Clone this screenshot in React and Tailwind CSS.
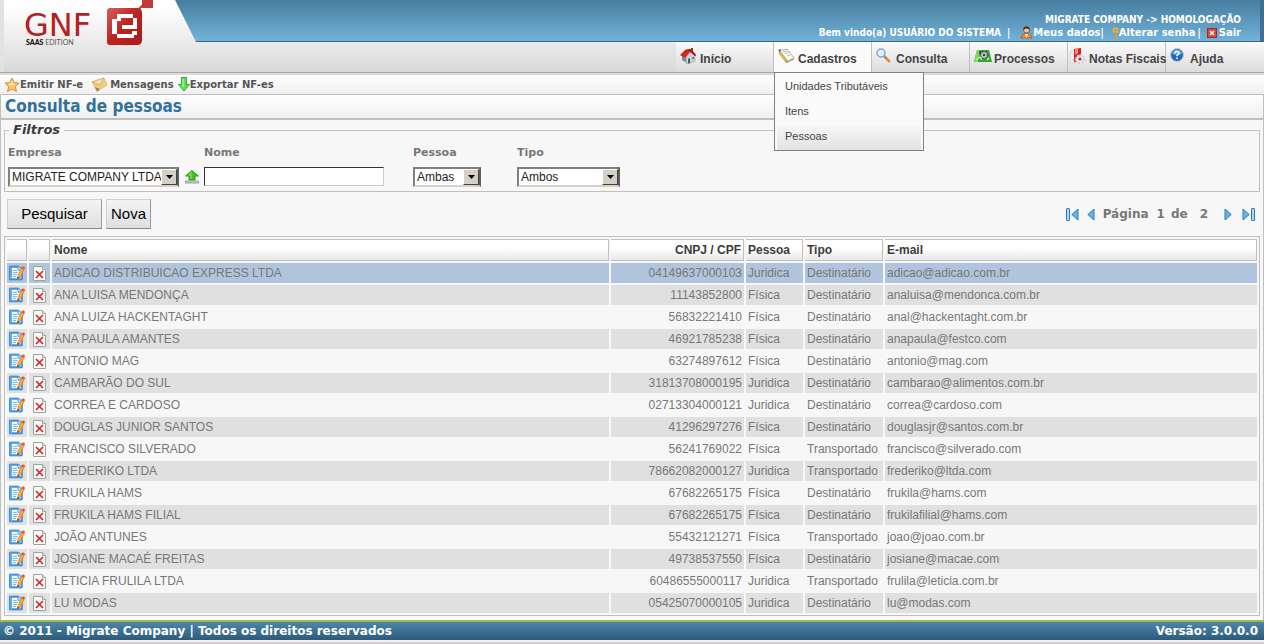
const menu = [
  { label: "Início", icon: HomeIcon },
  { label: "Cadastros", icon: FormIcon, open: true },
  { label: "Consulta", icon: SearchIcon },
  { label: "Processos", icon: ProcessIcon },
  { label: "Notas Fiscais", icon: InvoiceIcon, tight: true },
  { label: "Ajuda", icon: HelpIcon },
];

const submenu = ["Unidades Tributáveis", "Itens", "Pessoas"];

const pessoas = [
  ["ADICAO DISTRIBUICAO EXPRESS LTDA", "04149637000103", "Juridica", "Destinatário", "adicao@adicao.com.br"],
  ["ANA LUISA MENDONÇA", "11143852800", "Física", "Destinatário", "analuisa@mendonca.com.br"],
  ["ANA LUIZA HACKENTAGHT", "56832221410", "Física", "Destinatário", "anal@hackentaght.com.br"],
  ["ANA PAULA AMANTES", "46921785238", "Física", "Destinatário", "anapaula@festco.com"],
  ["ANTONIO MAG", "63274897612", "Física", "Destinatário", "antonio@mag.com"],
  ["CAMBARÃO DO SUL", "31813708000195", "Juridica", "Destinatário", "cambarao@alimentos.com.br"],
  ["CORREA E CARDOSO", "02713304000121", "Juridica", "Destinatário", "correa@cardoso.com"],
  ["DOUGLAS JUNIOR SANTOS", "41296297276", "Física", "Destinatário", "douglasjr@santos.com.br"],
  ["FRANCISCO SILVERADO", "56241769022", "Física", "Transportado", "francisco@silverado.com"],
  ["FREDERIKO LTDA", "78662082000127", "Juridica", "Transportado", "frederiko@ltda.com"],
  ["FRUKILA HAMS", "67682265175", "Física", "Destinatário", "frukila@hams.com"],
  ["FRUKILA HAMS FILIAL", "67682265175", "Física", "Destinatário", "frukilafilial@hams.com"],
  ["JOÃO ANTUNES", "55432121271", "Física", "Transportado", "joao@joao.com.br"],
  ["JOSIANE MACAÉ FREITAS", "49738537550", "Física", "Destinatário", "josiane@macae.com"],
  ["LETICIA FRULILA LTDA", "60486555000117", "Juridica", "Transportado", "frulila@leticia.com.br"],
  ["LU MODAS", "05425070000105", "Juridica", "Destinatário", "lu@modas.com"],
];

function HomeIcon() {
  return (
    <svg width="17" height="17" viewBox="0 0 17 17" aria-hidden="true">
      <path d="M2 8l5 1v6l-5-3z" fill="#7d8a94" />
      <path d="M6 9l5-5 4 4v5l-7 3-2-1z" fill="#c9d3da" stroke="#8a979f" strokeWidth=".6" />
      <path d="M0 7l5-5 6-1 5 6-1 1-5-4-5 6z" fill="#d2281c" />
      <path d="M5 2l6-1 5 6-1 1-5-5z" fill="#a3160f" />
      <rect x="11" y="0" width="2" height="3" fill="#b32a20" />
      <path d="M8 11l2-1v5l-2 .6z" fill="#4c5a66" />
      <rect x="12" y="9" width="2" height="2" fill="#4d81b5" />
    </svg>
  );
}

function FormIcon() {
  return (
    <svg width="17" height="16" viewBox="0 0 17 16" aria-hidden="true">
      <path d="M1 3l8-2 7 9-8 4z" fill="#fbfaf0" stroke="#9c9c8e" strokeWidth=".8" />
      <path d="M5 4l4-1M7 6l4-2M9 8l3-1" stroke="#a9b1b8" strokeWidth=".9" />
      <path d="M1 5l1.500-1 6.500 8v2l-2-1z" fill="#f1c644" stroke="#8d7326" strokeWidth=".6" />
      <path d="M0 2l3-1-1 3z" fill="#5c5c5c" />
      <path d="M8 14l8-4v1.500l-8 4z" fill="#a0a094" />
    </svg>
  );
}

function SearchIcon() {
  return (
    <svg width="15" height="15" viewBox="0 0 15 15" aria-hidden="true">
      <path d="M8 8l5 5" stroke="#d98c2b" strokeWidth="2.600" strokeLinecap="round" />
      <path d="M8 8l2 2" stroke="#8094a5" strokeWidth="2" />
      <circle cx="5" cy="5" r="4" fill="#dff0ff" stroke="#7aa5dd" strokeWidth="1.500" />
      <path d="M3 5a2 2 0 0 1 2-2" stroke="#fff" strokeWidth="1.200" fill="none" />
    </svg>
  );
}

function ProcessIcon() {
  return (
    <svg width="18" height="16" viewBox="0 0 18 16" aria-hidden="true">
      <path d="M3 2h12l3 12H0z" fill="#36a52d" />
      <path d="M3 2h3L4 14H0z" fill="#7bd667" />
      <path d="M5 3h8v3H5z" fill="#17651a" />
      <circle cx="10" cy="7" r="3.500" fill="#c9cdca" stroke="#4a524c" strokeWidth="1.400" strokeDasharray="1.800 1" />
      <circle cx="10" cy="7" r="1.300" fill="#3b473d" />
      <path d="M2 12l4-3 2 3M13 12l2-2" stroke="#d9f6cf" strokeWidth="1.100" fill="none" />
    </svg>
  );
}

function InvoiceIcon() {
  return (
    <svg width="17" height="18" viewBox="0 0 17 18" aria-hidden="true">
      <path d="M1 4l5-3v13l-5 2z" fill="#ececec" stroke="#cfcfcf" strokeWidth=".6" />
      <path d="M5 1l7-1v6l-3 2-3 4-1-1z" fill="#d9221c" />
      <path d="M6 1h3v4L6 7z" fill="#f28b85" />
      <circle cx="11" cy="11" r="4" fill="#efefef" stroke="#c9c9c9" strokeWidth="2" strokeDasharray="1.600 1.500" />
      <circle cx="11" cy="11" r="1.600" fill="#d9221c" />
      <path d="M4 11l3 2-1 2z" fill="#d9221c" />
    </svg>
  );
}

function HelpIcon() {
  return (
    <svg width="14" height="14" viewBox="0 0 14 14" aria-hidden="true">
      <circle cx="7" cy="7" r="6.400" fill="#1d66b8" stroke="#b9c6d2" />
      <path d="M2 6a5 4.500 0 0 1 10 0q-5 2-10 0z" fill="#5ea4e2" />
      <path d="M5 5.500q0-2 2-2t2 1.800q0 1-2 2v1" stroke="#fff" strokeWidth="1.500" fill="none" />
      <rect x="6.200" y="9.500" width="1.600" height="1.500" fill="#fff" />
    </svg>
  );
}

function StarIcon() {
  return (
    <svg width="16" height="16" viewBox="0 0 16 16" aria-hidden="true">
      <path d="M8 1l2.100 4.600 5 .5-3.700 3.400 1 5L8 12l-4.400 2.500 1-5L.9 6.100l5-.5z" fill="#fbc56a" stroke="#d98d33" strokeLinejoin="round" />
      <path d="M8 3.200l1.300 3.200 3 .3-5.800 2-2.800-2 3-.3z" fill="#ffe3ab" />
    </svg>
  );
}

function MailIcon() {
  return (
    <svg width="17" height="16" viewBox="0 0 17 16" aria-hidden="true">
      <path d="M1 5l12-4 3 7-10 6z" fill="#efcf87" stroke="#d0a95c" strokeWidth=".7" />
      <path d="M1 5l8 3 4-7z" fill="#f8e2ab" stroke="#c9a256" strokeWidth=".7" />
      <path d="M4 10l2 5 3-3z" fill="#a9854a" />
    </svg>
  );
}

function DownIcon() {
  return (
    <svg width="12" height="15" viewBox="0 0 12 15" aria-hidden="true">
      <path d="M3.500.5h5v7h3L6 14 .5 7.500h3z" fill="#5fdc5a" stroke="#35ab37" />
      <path d="M5 2v8" stroke="#b5f7ad" strokeWidth="1.200" />
    </svg>
  );
}

function UserIcon() {
  return (
    <svg width="13" height="13" viewBox="0 0 13 13" aria-hidden="true">
      <path d="M1 12q0-4 4-4.500h3q4 .5 4 4.500z" fill="#f08a2c" stroke="#a84b14" strokeWidth=".6" />
      <path d="M5 8h3l-1.500 4z" fill="#fff" />
      <circle cx="6.500" cy="4" r="3" fill="#f4c69a" stroke="#6b3d1c" strokeWidth=".7" />
      <path d="M3.300 4q0-4 3.500-3.600Q10 .8 9.800 4 8 2.500 6.500 2.500T3.300 4z" fill="#5a3217" />
    </svg>
  );
}

function KeyIcon() {
  return (
    <svg width="7" height="12" viewBox="0 0 7 12" aria-hidden="true">
      <circle cx="3.500" cy="3.200" r="2" fill="none" stroke="#f0ad35" strokeWidth="2" />
      <path d="M3.500 5v6.500M3.500 8h2M3.500 10.500h2" stroke="#e09a25" strokeWidth="1.500" />
    </svg>
  );
}

function ExitIcon() {
  return (
    <svg width="10" height="10" viewBox="0 0 10 10" aria-hidden="true">
      <rect x=".5" y=".5" width="9" height="9" fill="#d64a45" stroke="#a92724" />
      <path d="M3 3l4 4M7 3L3 7" stroke="#fff" strokeWidth="1.300" />
    </svg>
  );
}

function UpIcon() {
  return (
    <svg width="14" height="14" viewBox="0 0 14 14" aria-hidden="true">
      <path d="M7 .5L13.300 6H10v4H4V6H.7z" fill="#41c81c" stroke="#218a0f" strokeWidth=".9" />
      <path d="M7 2L4 5h2v4" stroke="#98ec6d" strokeWidth="1" fill="none" />
      <rect x=".5" y="11" width="13" height="2" fill="#d5d5d5" stroke="#8e8e8e" strokeWidth=".8" />
    </svg>
  );
}

function EditIcon() {
  return (
    <svg width="16" height="16" viewBox="0 0 16 16" aria-hidden="true" className="block">
      <path d="M.7 1.200h9l3.500 3.500v10.100H.7z" fill="#62aef0" stroke="#2f7fd0" />
      <path d="M3 3h6l2.500 2.500V13H3z" fill="#f2f9ff" />
      <path d="M9 1.500v3.700h4" fill="#cfe6fa" stroke="#2f7fd0" strokeWidth=".7" />
      <path d="M4 5.500h4M4 7.500h5M4 9.500h4M4 11.500h3" stroke="#7dbaf0" />
      <path d="M8.500 14l.4-3.400 4-8.400q1.200-1.200 2.600.2.300.6 0 1.200l-4 8.200z" fill="#fba63a" stroke="#d27a18" strokeWidth=".6" />
      <path d="M12.900 2.200q1.200-1.200 2.600.2.300.6 0 1.200l-.6 1.200-2.700-1.200z" fill="#e4584a" />
      <path d="M8.500 14l.2-2 1.500.8z" fill="#222" />
    </svg>
  );
}

function DeleteIcon() {
  return (
    <svg width="14" height="15" viewBox="0 0 14 15" aria-hidden="true" className="block">
      <path d="M.5.500h9l3 3V14.500H.5z" fill="#f7f9f7" stroke="#9aa69b" />
      <path d="M9.500.5v3h3" fill="#dfe5df" stroke="#9aa69b" />
      <path d="M3 5l7 7M10 5l-7 7" stroke="#cf2020" strokeWidth="1.500" />
    </svg>
  );
}

function PagerIcon({ bar, flip }) {
  return (
    <svg width={bar ? 13 : 8} height="13" viewBox={bar ? "0 0 13 13" : "5 0 8 13"} aria-hidden="true" className={flip ? "rotate-180" : ""}>
      {bar && <rect x=".5" y=".5" width="3" height="12" rx=".5" fill="#a8d8f5" stroke="#2f7fb5" />}
      <path d="M12 1v11L5.800 6.500z" fill="#62b5ea" stroke="#2f7fb5" />
    </svg>
  );
}

function Logo() {
  return (
    <a href="#" className="flex pl-5 text-[#b5211f]" aria-label="GNF-e SaaS Edition">
      <span className="flex w-[82px] flex-col pt-3">
        <span className="font-['DejaVu_Sans',sans-serif] text-[32px] leading-[26px]">GNF</span>
        <span className="pl-0.5 font-['Lato',sans-serif] text-[7px] leading-2 text-[#555]">
          <b className="font-black text-[#111]">SAAS</b> EDITION
        </span>
      </span>
      <svg width="48" height="46" viewBox="0 0 48 46" aria-hidden="true">
        <defs>
          <linearGradient id="logo" x1="0" y1="0" x2="1" y2="1">
            <stop offset="0" stopColor="#d2605d" />
            <stop offset=".5" stopColor="#bd2220" />
            <stop offset="1" stopColor="#a81a18" />
          </linearGradient>
        </defs>
        <path d="M4 8h27q5 0 5 5v27q0 5-5 5H4q-3 0-3-3V11q0-3 3-3z" fill="url(#logo)" />
        <path d="M36 0h11v8H36z" fill="#c4393a" />
        <path d="M33 9l4-4" stroke="#c4393a" strokeWidth="2" />
        {/* pixel "e" */}
        <path d="M11 14h16v4H11zM27 18h4v11h-4zM16 25h11v4H16zM6 19h5v15H6zM11 18h4v3h-4zM11 34h17v4H11zM26 31h5v4h-5z" fill="#fff" />
      </svg>
    </a>
  );
}

function Select({ id, value, className }) {
  return (
    <span className={`relative flex h-5 border-2 border-t-[#808080] border-l-[#808080] border-r-[#606060] border-b-[#d4d0c8] bg-white ${className}`}>
      <select id={id} className="w-full appearance-none pl-0.5 font-['Liberation_Sans',sans-serif] text-xs font-normal text-[#222] outline-none">
        <option>{value}</option>
      </select>
      <span className="pointer-events-none absolute inset-y-0 right-0 flex w-4 items-center justify-center border border-white border-r-[#404040] border-b-[#404040] bg-[#d4d0c8]">
        <svg width="7" height="4" viewBox="0 0 7 4"><path d="M0 0h7L3.500 4z" /></svg>
      </span>
    </span>
  );
}

function Header() {
  return (
    <header className="flex h-[73px] border-b border-[#a8a8a8] bg-linear-to-b from-white from-10% to-[#d9d9d9]">
      <div className="w-[175px] shrink-0 border-l-4 border-[#e2e2e2]">
        <Logo />
      </div>
      <div className="flex min-w-0 grow flex-col">
        <div className="flex h-[42px] flex-col items-end border-r-4 border-b border-r-[#41708e] border-b-[#3d6580] bg-linear-to-b from-[#477d9f] to-[#72b2da] pt-[13px] pr-[19px] font-['DejaVu_Sans_Condensed','DejaVu_Sans',sans-serif] text-[10px] font-bold text-white [clip-path:polygon(0_0,100%_0,100%_100%,21px_100%)]">
          <span className="leading-[13px]">MIGRATE COMPANY -&gt; HOMOLOGAÇÃO</span>
          <div className="flex items-center leading-[13px]">
            <span>Bem vindo(a) USUÁRIO DO SISTEMA</span>
            <span className="px-1.5">|</span>
            <a href="#" className="flex items-center pl-1 font-['DejaVu_Sans',sans-serif]"><UserIcon />Meus dados</a>
            <span className="pr-2">|</span>
            <a href="#" className="flex items-center font-['DejaVu_Sans',sans-serif]"><KeyIcon />Alterar senha</a>
            <span className="px-0.5">|</span>
            <a href="#" className="flex items-center gap-0.5 pl-1 font-['DejaVu_Sans',sans-serif]"><ExitIcon />Sair</a>
          </div>
        </div>
        <nav className="flex grow justify-end font-['Liberation_Sans',sans-serif] text-xs font-bold text-[#444]">
          {menu.map(({ label, icon: Icon, open, tight }) => (
            <div key={label} className={`relative w-[98px] border-r border-[#bfbfbf] last:border-r-0 ${open ? "bg-[#fafafa]" : "bg-linear-to-b from-[#fafafa] to-[#dcdcdc]"}`}>
              <a href="#" className={`flex h-full items-center whitespace-nowrap ${tight ? "pl-px" : "pl-1"}`}>
                <span className="w-5 shrink-0 self-start pt-1.5"><Icon /></span>
                <span className="pt-1">{label}</span>
              </a>
              {open && (
                <ul className="absolute top-full left-0 z-10 w-[150px] border border-[#808080] bg-[#fafafa] p-0.5 pb-0 text-[11px] font-normal">
                  {submenu.map((item) => (
                    <li key={item}>
                      <a href="#" className={`block h-[25px] pl-2 leading-[23px] ${item === "Pessoas" ? "bg-linear-to-b from-[#f7f7f7] to-[#e2e2e2]" : ""}`}>{item}</a>
                    </li>
                  ))}
                </ul>
              )}
            </div>
          ))}
        </nav>
      </div>
    </header>
  );
}

function Filters() {
  const label = "mb-1.5 text-[#777] leading-4";
  return (
    <fieldset className="mx-[3px] border border-[#bfbfbf] px-[3px] pb-1 text-[11px] font-bold">
      <legend className="ml-px px-1 text-[13px] leading-3.5 text-[#3c3c3c] italic">Filtros</legend>
      <div className="flex pt-2">
        <div className="flex w-[196px] flex-col">
          <label htmlFor="empresa" className={label}>Empresa</label>
          <div className="flex items-center gap-1.5">
            <Select id="empresa" value="MIGRATE COMPANY LTDA" className="w-[171px]" />
            <button type="button" aria-label="Selecionar empresa"><UpIcon /></button>
          </div>
        </div>
        <div className="flex w-[209px] flex-col">
          <label htmlFor="nome" className={label}>Nome</label>
          <input id="nome" type="text" className="h-[19px] w-[180px] border border-t-[#333] border-r-[#ccc] border-b-[#ccc] border-l-[#333] bg-white px-1 font-normal" />
        </div>
        <div className="flex w-[104px] flex-col">
          <label htmlFor="pessoa" className={label}>Pessoa</label>
          <Select id="pessoa" value="Ambas" className="w-[68px]" />
        </div>
        <div className="flex flex-col">
          <label htmlFor="tipo" className={label}>Tipo</label>
          <Select id="tipo" value="Ambos" className="w-[103px]" />
        </div>
      </div>
    </fieldset>
  );
}

function PeopleTable() {
  const th = "h-[22px] border border-l-0 border-[#bfbfbf] bg-linear-to-b from-white from-40% to-[#e8e8e8] px-0.5 py-0 text-left";
  return (
    <div className="mx-[3px] border border-[#bfbfbf] font-['Liberation_Sans',sans-serif] text-xs">
      <table className="w-full table-fixed border-separate border-spacing-0.5">
        <colgroup>
          <col className="w-5" />
          <col className="w-[21px]" />
          <col />
          <col className="w-[133px]" />
          <col className="w-[57px]" />
          <col className="w-[78px]" />
          <col className="w-[372px]" />
        </colgroup>
        <thead className="text-[#3c3c3c]">
          <tr>
            <th className={th} aria-label="Editar" />
            <th className={th} aria-label="Excluir" />
            <th className={th}>Nome</th>
            <th className={`${th} !text-right`}>CNPJ / CPF</th>
            <th className={th}>Pessoa</th>
            <th className={th}>Tipo</th>
            <th className={th}>E-mail</th>
          </tr>
        </thead>
        <tbody className="text-[#777]">
          {pessoas.map(([nome, doc, pessoa, tipo, email], i) => {
            const bg = i === 0 ? "bg-[#b0c4de]" : i % 2 ? "bg-[#e0e0e0]" : "bg-[#f7f7f7]";
            const td = `h-5 overflow-hidden px-0.5 py-0 whitespace-nowrap ${bg}`;
            return (
              <tr key={nome}>
                <td className={td}>
                  <button type="button" aria-label={`Editar ${nome}`} className="block"><EditIcon /></button>
                </td>
                <td className={`${td} pl-1`}>
                  <button type="button" aria-label={`Excluir ${nome}`} className="block"><DeleteIcon /></button>
                </td>
                <td className={td}>{nome}</td>
                <td className={`${td} text-right`}>{doc}</td>
                <td className={td}>{pessoa}</td>
                <td className={td}>{tipo}</td>
                <td className={td}>{email}</td>
              </tr>
            );
          })}
        </tbody>
      </table>
    </div>
  );
}

export default function App() {
  const btn = "h-[30px] border border-t-[#d0d0d0] border-l-[#d0d0d0] border-r-[#999] border-b-[#888] bg-linear-to-b from-[#f4f4f4] to-[#dedede] font-['Liberation_Sans',sans-serif] text-[15px] text-black";
  return (
    <div className="min-h-screen bg-[#d6d1ca] font-['DejaVu_Sans',sans-serif]">
      <Header />

      {/* Toolbar */}
      <div className="flex h-[21px] items-center border-t-2 border-[#dcdcdc] bg-linear-to-b from-white to-[#efefef] pl-1 text-[10px] font-bold text-[#555]">
        <a href="#" className="flex items-center pr-2"><StarIcon />Emitir NF-e</a>
        <a href="#" className="flex items-center gap-0.5 pr-1"><MailIcon />Mensagens</a>
        <a href="#" className="flex items-center"><DownIcon />Exportar NF-es</a>
      </div>

      <main className="border-x border-[#bfbfbf] bg-[#f7f7f7] pb-1">
        <h1 className="mb-[3px] h-[26px] border-t border-b-2 border-[#bfbfbf] bg-linear-to-b from-white to-[#efefef] pl-1 font-['DejaVu_Sans_Condensed','DejaVu_Sans',sans-serif] text-[17px] leading-[22px] font-bold text-[#33719c]">
          Consulta de pessoas
        </h1>
        <Filters />

        <div className="flex items-center justify-between py-[7px] pr-2 pl-1.5">
          <div className="flex gap-1">
            <button type="button" className={`${btn} w-[95px]`}>Pesquisar</button>
            <button type="button" className={`${btn} w-[45px]`}>Nova</button>
          </div>
          <div className="flex items-center text-xs font-bold text-[#777]">
            <button type="button" aria-label="Primeira página" className="mr-2"><PagerIcon bar /></button>
            <button type="button" aria-label="Página anterior" className="mr-2"><PagerIcon /></button>
            <span className="mr-2">Página</span>
            <span className="mr-1.5">1</span>
            <span className="mr-3">de</span>
            <span className="mr-4">2</span>
            <button type="button" aria-label="Próxima página" className="mr-2.5"><PagerIcon flip /></button>
            <button type="button" aria-label="Última página"><PagerIcon bar flip /></button>
          </div>
        </div>

        <PeopleTable />
      </main>

      <footer className="flex h-[22px] items-center justify-between border-t-2 border-b-2 border-t-[#9fbc3a] border-b-[#f4f2f0] bg-linear-to-b from-[#4d87ab] to-[#2c5b7b] pr-1.5 pl-[3px] text-xs font-bold text-white">
        <span>© 2011 - Migrate Company | Todos os direitos reservados</span>
        <span>Versão: 3.0.0.0</span>
      </footer>
    </div>
  );
}
